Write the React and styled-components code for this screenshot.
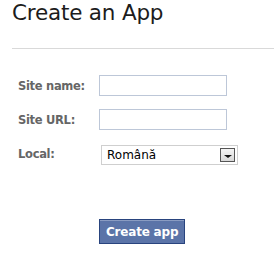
import React from "react";
import styled, { createGlobalStyle } from "styled-components";

const Global = createGlobalStyle`
  body {
    margin: 0;
    background: #fff;
    font-family: Tahoma, "DejaVu Sans", Verdana, sans-serif;
  }
`;

const Page = styled.div`
  width: 274px;
  height: 256px;
  overflow: hidden;
  padding-left: 12px;
  box-sizing: border-box;
`;

const Title = styled.h1`
  margin: 0;
  font-family: "DejaVu Sans", sans-serif;
  font-weight: normal;
  font-size: 21.5px;
  line-height: 25px;
  color: #1c1c1c;
  letter-spacing: -0.2px;
`;

const Divider = styled.div`
  margin-top: 23px;
  height: 1px;
  background: #d9d9d9;
`;

const Form = styled.form`
  display: grid;
  grid-template-columns: 81px auto;
  row-gap: 13px;
  padding: 26px 0 0 6px;
  align-items: center;
`;

const Label = styled.label`
  font-family: "DejaVu Sans", sans-serif;
  font-weight: bold;
  font-size: 11.5px;
  letter-spacing: -0.3px;
  color: #666;
`;

const Input = styled.input`
  box-sizing: border-box;
  width: 128px;
  height: 21px;
  margin: 0;
  border: 1px solid #bdc7d8;
  padding: 2px 3px;
  font-size: 11px;
`;

const Select = styled.div`
  box-sizing: border-box;
  width: 137px;
  height: 20px;
  margin-left: 2px;
  margin-top: 2px;
  border: 1px solid #cfcfcf;
  display: flex;
  align-items: center;
  justify-content: space-between;
  padding: 0 2px 0 5px;
  font-family: "DejaVu Sans", sans-serif;
  font-size: 12px;
  color: #000;
`;

const Arrow = styled.span`
  box-sizing: border-box;
  width: 15px;
  height: 14px;
  border: 1px solid #555;
  background: linear-gradient(#f4f4f4, #d8d8d8);
  display: flex;
  align-items: center;
  justify-content: center;
  &::after {
    content: "";
    margin-top: 3px;
    border-left: 4px solid transparent;
    border-right: 4px solid transparent;
    border-top: 3px solid #111;
  }
`;

const Actions = styled.div`
  grid-column: 2;
  padding-top: 41px;
`;

const Button = styled.button`
  box-sizing: border-box;
  height: 25px;
  padding: 0 6px;
  background: #5b74a8;
  border: 1px solid #29447e;
  box-shadow: inset 0 1px 0 #8a9cc2;
  color: #fff;
  font-family: "DejaVu Sans", sans-serif;
  font-weight: bold;
  font-size: 12px;
  letter-spacing: -0.2px;
  cursor: pointer;
`;

export default function App() {
  return (
    <>
      <Global />
      <Page>
        <Title>Create an App</Title>
        <Divider />
        <Form>
          <Label>Site name:</Label>
          <Input />
          <Label>Site URL:</Label>
          <Input />
          <Label>Local:</Label>
          <Select>
            <span>Română</span>
            <Arrow />
          </Select>
          <Actions>
            <Button type="button">Create app</Button>
          </Actions>
        </Form>
      </Page>
    </>
  );
}
